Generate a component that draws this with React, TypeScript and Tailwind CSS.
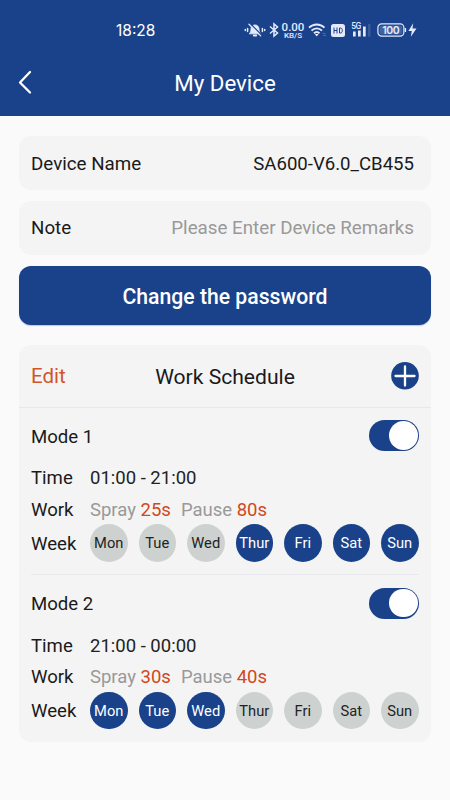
import React, { useState } from 'react';

const DAYS = ['Mon', 'Tue', 'Wed', 'Thur', 'Fri', 'Sat', 'Sun'];

interface Mode {
  name: string;
  time: string;
  spray: string;
  pause: string;
  days: string[];
  enabled: boolean;
}

const initialModes: Mode[] = [
  {
    name: 'Mode 1',
    time: '01:00 - 21:00',
    spray: '25s',
    pause: '80s',
    days: ['Thur', 'Fri', 'Sat', 'Sun'],
    enabled: true,
  },
  {
    name: 'Mode 2',
    time: '21:00 - 00:00',
    spray: '30s',
    pause: '40s',
    days: ['Mon', 'Tue', 'Wed'],
    enabled: true,
  },
];

const BellOffIcon = () => (
  <svg width="22" height="16" viewBox="0 0 22 16" fill="none" stroke="currentColor" strokeLinecap="round">
    <path d="M5.500 11.500c1-1 1.500-2 1.500-4.300C7 4.800 8.600 3 11 3s4 1.800 4 4.200c0 2.300.5 3.300 1.500 4.300z" fill="currentColor" strokeWidth="1" />
    <path d="M9.800 13.500h2.400" strokeWidth="1.800" />
    <path d="M6.300 1.700l11.500 11.500" stroke="#1a428a" strokeWidth="1.300" />
    <path d="M5 2.200l11.700 11.700" strokeWidth="1.300" />
    <path d="M3.600 6.500v3M18.400 6.500v3M1.300 7.600v.8M20.700 7.600v.8" strokeWidth="1.500" />
  </svg>
);

const BluetoothIcon = () => (
  <svg width="10" height="16" viewBox="0 0 10 16" fill="none" stroke="currentColor" strokeWidth="1.500">
    <path d="M1 4.500l7.500 6.500L5 14V2l3.500 3L1 11.500" />
  </svg>
);

const WifiIcon = () => (
  <svg width="19" height="16" viewBox="0 0 19 16" fill="none" stroke="currentColor">
    <path d="M1 5.700c4.300-4.300 11.200-4.300 15.500 0" strokeWidth="1.900" />
    <path d="M3.500 8.600c3-3 7.500-3 10.500 0" strokeWidth="1.900" />
    <path d="M6 11.200c1.600-1.500 3.900-1.500 5.500 0" strokeWidth="1.900" />
    <path d="M6.800 12h3.900L8.750 14.500z" fill="currentColor" stroke="none" />
    <path d="M14.500 11.500h3M15 13.500h3" stroke="#4d6ca6" strokeWidth="1" />
  </svg>
);

const HdIcon = () => (
  <svg width="14" height="13" viewBox="0 0 14 13" fill="none" stroke="#1a428a">
    <rect width="14" height="13" rx="2.500" fill="currentColor" stroke="none" />
    <path d="M3 3.500v6M6 3.500v6M3 6.500h3M8.500 4v5h.8c1.400 0 2-1 2-2.500s-.6-2.500-2-2.500z" strokeWidth="1" />
  </svg>
);

const SignalIcon = () => (
  <svg width="20" height="16" viewBox="0 0 20 16" fill="currentColor">
    <text x="0.2" y="6.800" fontSize="8.500" fontWeight="500" fontFamily="Roboto, sans-serif" textLength="10">5G</text>
    <rect x="2" y="9.500" width="2.700" height="5" />
    <rect x="7" y="8.500" width="2.700" height="6" />
    <rect x="12" y="4.500" width="2.700" height="10" />
    <rect x="17" y="2" width="2.500" height="12.500" opacity="0.15" />
  </svg>
);

const BatteryIcon = () => (
  <svg width="41" height="16" viewBox="0 0 41 16" fill="none" stroke="currentColor">
    <rect x="0.900" y="1.900" width="26" height="12.200" rx="3.800" strokeWidth="1.200" />
    <rect x="2.500" y="3.500" width="22.800" height="9" rx="2.300" fill="#40639f" stroke="none" />
    <path d="M28.400 6v4" strokeWidth="1.400" />
    <text x="5.200" y="11.800" fill="currentColor" stroke="none" fontSize="10.500" fontWeight="600" fontFamily="Inter, sans-serif" textLength="17.500">100</text>
    <path d="M36.200 1.200L31.400 9h3.400l-1 5.700 5.700-8.200h-4z" fill="currentColor" stroke="none" />
  </svg>
);

const StatusBar = () => (
  <div className="flex h-[60px] items-center justify-between pr-8 pl-[116px] text-[#e4eafc]">
    <span className="pt-[2px] font-['Inter'] text-[15.5px] leading-none text-white">18:28</span>
    <div className="flex items-center">
      <BellOffIcon />
      <div className="ml-[3px] flex"><BluetoothIcon /></div>
      <div className="ml-[2px] w-[24px] text-center font-['Roboto'] font-medium">
        <div className="text-[11.5px] leading-[10px]">0.00</div>
        <div className="text-[8px] leading-[7px]">KB/S</div>
      </div>
      <div className="ml-[3px] flex"><WifiIcon /></div>
      <div className="ml-[4px] flex"><HdIcon /></div>
      <div className="ml-[6px] flex"><SignalIcon /></div>
      <div className="ml-[6px] flex"><BatteryIcon /></div>
    </div>
  </div>
);

const Toggle: React.FC<{ checked: boolean; onChange: () => void }> = ({ checked, onChange }) => (
  <button
    type="button"
    role="switch"
    aria-checked={checked}
    onClick={onChange}
    className={`flex h-[31px] w-[50px] items-center rounded-full p-[1.3px] ${
      checked ? 'justify-end bg-[#1a428a]' : 'justify-start bg-[#cdd2d1]'
    }`}
  >
    <span className="size-[28.4px] rounded-full bg-white" />
  </button>
);

const ModeItem: React.FC<{ mode: Mode; onToggle: () => void }> = ({ mode, onToggle }) => (
  <div className="py-[12.5px]">
    <div className="flex items-center justify-between">
      <span className="pt-[3px]">{mode.name}</span>
      <Toggle checked={mode.enabled} onChange={onToggle} />
    </div>
    <div className="mt-[11px] flex h-[31px] items-center pt-[2px]">
      <span className="w-[59px]">Time</span>
      <span className="text-[18.5px] text-[#222]">{mode.time}</span>
    </div>
    <div className="flex h-[31px] items-center pt-[3px]">
      <span className="w-[59px]">Work</span>
      <span className="text-[18.5px] text-[#999]">
        Spray <span className="text-[#d0481b]">{mode.spray}</span>
      </span>
      <span className="ml-[10px] text-[18.5px] text-[#999]">
        Pause <span className="text-[#d0481b]">{mode.pause}</span>
      </span>
    </div>
    <div className="flex h-[37.5px] items-center">
      <span className="w-[59px] pt-[3px]">Week</span>
      <div className="flex flex-1 justify-between pr-[0.5px]">
        {DAYS.map((day) => (
          <span
            key={day}
            className={`flex size-[37.5px] items-center justify-center rounded-full pt-[2px] text-[14.7px] ${
              mode.days.includes(day) ? 'bg-[#1a428a] text-white' : 'bg-[#cdd2d1] text-[#222]'
            }`}
          >
            {day}
          </span>
        ))}
      </div>
    </div>
  </div>
);

const App: React.FC = () => {
  const [modes, setModes] = useState(initialModes);

  const toggleMode = (index: number) => {
    setModes(modes.map((m, i) => (i === index ? { ...m, enabled: !m.enabled } : m)));
  };

  return (
    <div className="min-h-screen w-[450px] bg-[#fafafa] font-['Roboto',sans-serif] text-[18.6px] leading-none text-[#1a1a1a]">
      <header className="h-[116px] bg-[#1a428a] text-white">
        <StatusBar />
        <div className="grid h-[46px] grid-cols-[60px_1fr_60px] items-center">
          <button type="button" aria-label="Back" className="pl-[18px]">
            <svg width="15" height="26" viewBox="0 0 15 26" fill="none" stroke="currentColor" strokeWidth="2.300" strokeLinecap="round" strokeLinejoin="round">
              <path d="M12 2L2 12.500l10 10" />
            </svg>
          </button>
          <h1 className="pt-[1px] text-center text-[22.3px]">My Device</h1>
        </div>
      </header>

      <main className="px-[19px] pt-5">
        <div className="flex h-[54px] items-center justify-between rounded-xl bg-[#f4f4f4] pt-[2px] pr-[17px] pl-3">
          <span className="text-[18.75px]">Device Name</span>
          <span>SA600-V6.0_CB455</span>
        </div>
        <div className="mt-[10.5px] flex h-[54.5px] items-center justify-between rounded-xl bg-[#f4f4f4] pt-[2px] pr-[17px] pl-3">
          <span className="text-[18.75px]">Note</span>
          <span className="text-[18.75px] text-[#999]">Please Enter Device Remarks</span>
        </div>
        <button
          type="button"
          className="mt-[10.5px] h-[59.500px] w-full rounded-xl bg-[#1a428a] pt-[3px] text-[21.2px] font-medium text-white shadow-[0_1px_1px_#b9c8ec]"
        >
          Change the password
        </button>

        <section className="mt-[20px] rounded-xl bg-[#f4f4f4]">
          <div className="grid h-[62.500px] grid-cols-[60px_1fr_60px] items-center border-b border-[#e8e8e8] px-3 text-[21.1px]">
            <button type="button" className="pt-[1px] text-left text-[20.5px] text-[#cf562b]">Edit</button>
            <h2 className="pt-[2px] text-center">Work Schedule</h2>
            <button type="button" aria-label="Add mode" className="justify-self-end">
              <svg width="28" height="28" viewBox="0 0 28 28" stroke="white" strokeWidth="2.300" strokeLinecap="round">
                <circle cx="14" cy="13.800" r="13.800" fill="#1a428a" stroke="none" />
                <path d="M14 4.500v19M4.500 14h19" />
              </svg>
            </button>
          </div>
          <div className="divide-y divide-[#e8e9ec] px-3">
            {modes.map((mode, i) => (
              <ModeItem key={mode.name} mode={mode} onToggle={() => toggleMode(i)} />
            ))}
          </div>
        </section>
      </main>
    </div>
  );
};

export default App;
